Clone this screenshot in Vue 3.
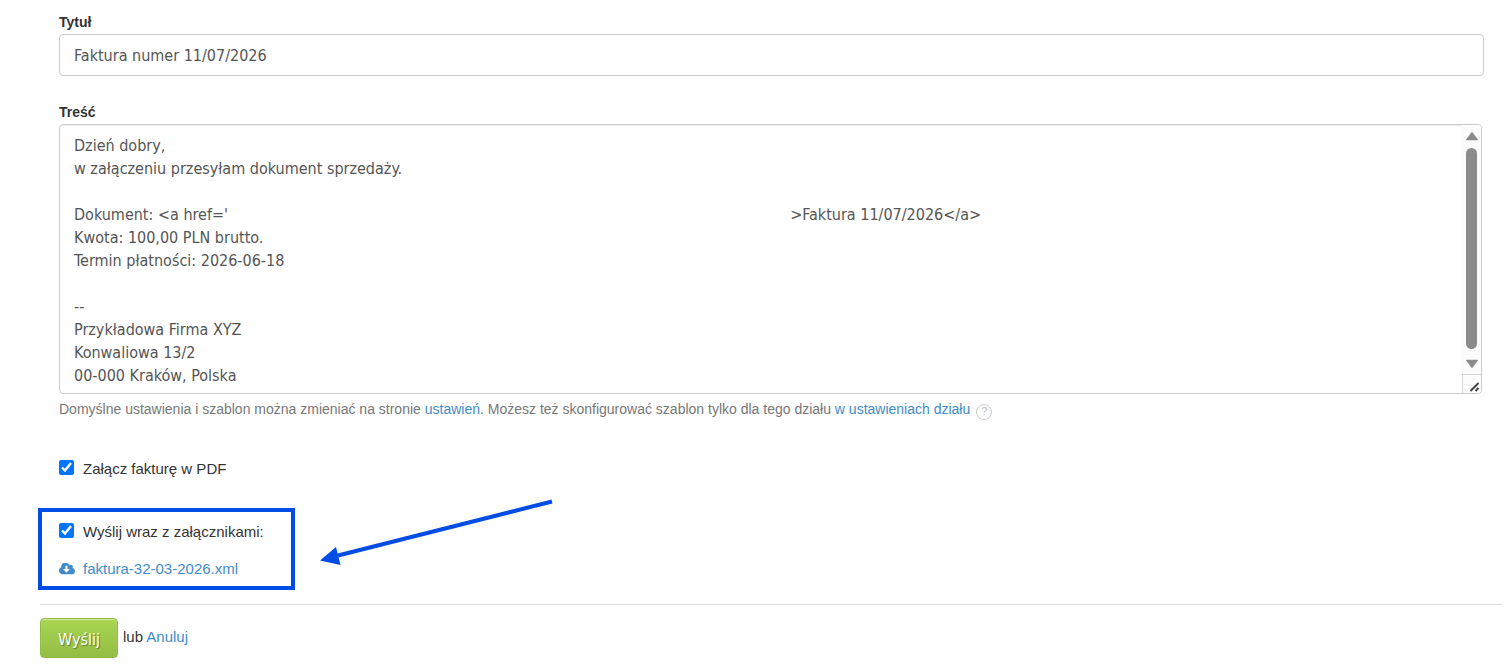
<script setup>
import { ref } from 'vue'

const title = ref('Faktura numer 11/07/2026')
const body = ref(
  [
    'Dzień dobry,',
    'w załączeniu przesyłam dokument sprzedaży.',
    '',
    "Dokument: <a href='" + '\u00a0'.repeat(123) + '>Faktura 11/07/2026</a>',
    'Kwota: 100,00 PLN brutto.',
    'Termin płatności: 2026-06-18',
    '',
    '--',
    'Przykładowa Firma XYZ',
    'Konwaliowa 13/2',
    '00-000 Kraków, Polska',
  ].join('\n')
)
const attachPdf = ref(true)
const attachFiles = ref(true)
</script>

<template>
  <form class="page" @submit.prevent>
    <div class="fields">
      <label class="label" for="title">Tytuł</label>
      <input id="title" v-model="title" class="control" type="text" />

      <label class="label label-body" for="body">Treść</label>
      <div class="editor">
        <textarea id="body" v-model="body" class="editor-text" rows="11"></textarea>
        <div class="scroll" aria-hidden="true">
          <svg class="arrow" viewBox="0 0 12 9"><path d="M6 1.5 10.800 7.800H1.200z" /></svg>
          <div class="thumb"></div>
          <svg class="arrow" viewBox="0 0 12 9"><path d="M6 7.500 1.200 1.200h9.600z" /></svg>
          <svg class="grip" viewBox="0 0 18 18">
            <path d="M7.500 16 15.500 8M12.500 16l3-3" />
          </svg>
        </div>
      </div>
      <p class="hint">
        Domyślne ustawienia i szablon można zmieniać na stronie <a href="#">ustawień</a>. Możesz też
        skonfigurować szablon tylko dla tego działu <a href="#">w ustawieniach działu</a>
        <button class="help" type="button" aria-label="Pomoc">?</button>
      </p>

      <label class="check"><input v-model="attachPdf" type="checkbox" />Załącz fakturę w PDF</label>

      <div class="marked">
        <label class="check"><input v-model="attachFiles" type="checkbox" />Wyślij wraz z załącznikami:</label>
        <a class="file" href="#">
          <svg class="cloud" viewBox="0 256 1920 1280" aria-hidden="true">
            <path
              fill-rule="evenodd"
              d="M1280 928q0-14-9-23t-23-9h-224v-352q0-13-9.500-22.500t-22.500-9.500h-192q-13 0-22.500 9.500t-9.500 22.500v352h-224q-13 0-22.500 9.500t-9.500 22.500q0 14 9 23l352 352q9 9 23 9t23-9l351-351q10-12 10-24zm640 224q0 159-112.500 271.500t-271.500 112.500h-1088q-185 0-316.500-131.500t-131.500-316.500q0-130 70-240t188-165q-2-30-2-43 0-212 150-362t362-150q156 0 285.500 87t188.500 231q71-62 166-62 106 0 181 75t75 181q0 76-41 138 130 31 213.500 135.500t83.500 238.500z"
            />
          </svg>
          faktura-32-03-2026.xml
        </a>
        <svg class="pointer" viewBox="0 0 236 68" aria-hidden="true">
          <path class="shaft" d="M234 3.500 20 57.500" />
          <path d="M2 62.500 18 49l4.500 18z" />
        </svg>
      </div>
    </div>

    <div class="actions">
      <button class="send" type="submit">Wyślij</button>
      <span>lub <a href="#">Anuluj</a></span>
    </div>
  </form>
</template>

<style>
body {
  background: #fff;
}
</style>

<style scoped>
.page {
  box-sizing: border-box;
  padding: 12px 9px 0 40px;
  font-family: 'Liberation Sans', Arial, sans-serif;
  font-size: 15px;
  line-height: 20px;
  color: #333;
}
a {
  color: #428bca;
  text-decoration: none;
}
.fields {
  display: flex;
  flex-direction: column;
  align-items: flex-start;
  padding: 0 18px 14px 19px;
}
.label {
  margin-bottom: 2px;
  font-size: 14px;
  font-weight: bold;
}
.label-body {
  margin-top: 26px;
}
.control,
.editor {
  box-sizing: border-box;
  width: 100%;
  border: 1px solid #ccc;
  border-radius: 4px;
  background: #fff;
}
.control,
.editor-text,
.send {
  font-family: 'DejaVu Sans Condensed', 'Noto Sans', sans-serif;
  font-size: 16px;
  color: #555;
}
.control {
  height: 42px;
  padding: 0 14px;
}
.editor {
  display: flex;
  width: calc(100% - 2px);
  overflow: hidden;
  box-shadow: inset 0 1px 1px rgba(0, 0, 0, 0.075);
}
.editor-text {
  flex: 1;
  min-width: 0;
  box-sizing: border-box;
  height: 268px;
  padding: 9px 14px 6px;
  border: 0;
  outline: 0;
  background: transparent;
  line-height: 23px;
  resize: none;
  overflow: hidden;
}
.scroll {
  display: flex;
  flex-direction: column;
  align-items: center;
  width: 19px;
  padding-top: 6px;
  background: #fcfcfc;
}
.arrow {
  width: 14px;
  height: 10px;
  fill: #8b8b8b;
  stroke: #8b8b8b;
  stroke-width: 1;
  stroke-linejoin: round;
}
.thumb {
  flex: 1;
  width: 11px;
  margin: 7px 0 10px;
  border-radius: 6px;
  background: #8b8b8b;
}
.grip {
  box-sizing: border-box;
  width: 19px;
  height: 19px;
  margin-top: 5px;
  border-top: 1px solid #d5d5d5;
  border-left: 1px solid #d5d5d5;
  fill: none;
  stroke: #444;
  stroke-width: 2;
}
.hint {
  margin: 5px 0 40px;
  font-size: 14px;
  color: #777;
}
.help {
  width: 16px;
  height: 16px;
  margin: -4px 0 -4px 6px;
  padding: 0;
  border: 1px solid #ccc;
  border-radius: 50%;
  background: #fff;
  font-family: inherit;
  font-size: 10px;
  line-height: 14px;
  color: #bbb;
  vertical-align: -1px;
}
.check {
  display: flex;
  gap: 9px;
}
.check input {
  width: 15px;
  height: 15px;
  margin: 1px 0 0;
  accent-color: #0075ff;
}
.marked {
  position: relative;
  margin: 29px 0 0 -21px;
  padding: 10px 27px 7px 17px;
  border: 4px solid #004de6;
}
.file {
  display: flex;
  align-items: center;
  gap: 8px;
  margin-top: 17px;
}
.cloud {
  width: 16px;
  height: 12px;
  fill: #428bca;
}
.pointer {
  position: absolute;
  top: -14px;
  left: 276px;
  width: 236px;
  height: 68px;
  fill: #004de6;
}
.shaft {
  stroke: #004de6;
  stroke-width: 4;
}
.actions {
  display: flex;
  gap: 5px;
  padding-top: 13px;
  border-top: 1px solid #ddd;
}
.actions span {
  margin-top: 9px;
}
.send {
  height: 40px;
  padding: 3px 17px 0;
  border: 1px solid #8fbb45;
  border-radius: 4px;
  background: linear-gradient(#a9d651, #93bd45);
  box-shadow: inset 0 1px 1px rgba(255, 255, 255, 0.5);
  color: #fff;
  text-shadow: 1px 1px 1px rgba(0, 0, 0, 0.4);
}
</style>
